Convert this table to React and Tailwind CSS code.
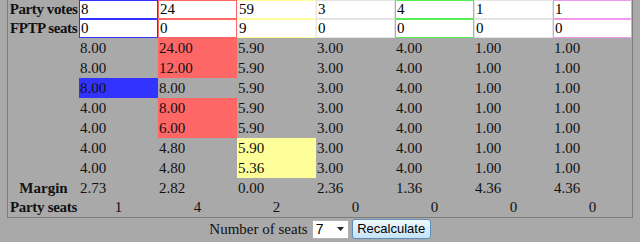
import React from "react";

// party columns: votes, FPTP seats and the colour used for inputs / winning quotients
const parties = [
  { votes: 8, fptp: 0, border: "border-[#3333ff]", fill: "bg-[#3333ff]" },
  { votes: 24, fptp: 0, border: "border-[#ff6666]", fill: "bg-[#ff6666]" },
  { votes: 59, fptp: 9, border: "border-[#ffff99]", fill: "bg-[#ffff99]" },
  { votes: 3, fptp: 0, border: "border-[#e4e4e4]", fill: "bg-white" },
  { votes: 4, fptp: 0, border: "border-[#55ee55]", fill: "bg-[#55ee55]" },
  { votes: 1, fptp: 0, border: "border-[#e4e4e4]", fill: "bg-white" },
  { votes: 1, fptp: 0, border: "border-[#ee99ee]", fill: "bg-[#ee99ee]" },
];

// quotient rows, [value, winner?] per party
const rows = [
  [["8.00"], ["24.00", 1], ["5.90"], ["3.00"], ["4.00"], ["1.00"], ["1.00"]],
  [["8.00"], ["12.00", 1], ["5.90"], ["3.00"], ["4.00"], ["1.00"], ["1.00"]],
  [["8.00", 1], ["8.00"], ["5.90"], ["3.00"], ["4.00"], ["1.00"], ["1.00"]],
  [["4.00"], ["8.00", 1], ["5.90"], ["3.00"], ["4.00"], ["1.00"], ["1.00"]],
  [["4.00"], ["6.00", 1], ["5.90"], ["3.00"], ["4.00"], ["1.00"], ["1.00"]],
  [["4.00"], ["4.80"], ["5.90", 1], ["3.00"], ["4.00"], ["1.00"], ["1.00"]],
  [["4.00"], ["4.80"], ["5.36", 1], ["3.00"], ["4.00"], ["1.00"], ["1.00"]],
];

const margins = ["2.73", "2.82", "0.00", "2.36", "1.36", "4.36", "4.36"];
const seats = [1, 4, 2, 0, 0, 0, 0];

function InputRow({ label, field }) {
  return (
    <tr className="h-[19px]">
      <th className="p-0 text-center font-bold whitespace-nowrap tracking-[-0.4px] leading-[19px]">{label}</th>
      {parties.map((p, i) => (
        <td key={i} className="p-0">
          <input
            defaultValue={p[field]}
            className={`block w-[79px] h-[19px] bg-white border ${p.border} px-[1px] text-[15px] leading-[17px] text-black outline-none font-['Liberation_Serif',serif]`}
          />
        </td>
      ))}
    </tr>
  );
}

export default function App() {
  return (
    <div className="h-[242px] overflow-hidden bg-[#a9a9a9] text-[#111] font-['Liberation_Serif',serif] text-[15px]">
      <table className="-mt-px ml-[7px] w-[626px] table-fixed border border-[#7c7c7c] border-separate border-spacing-0">
        <colgroup>
          <col className="w-[71px]" />
          {parties.map((_, i) => (
            <col key={i} className="w-[79px]" />
          ))}
        </colgroup>
        <tbody>
          <InputRow label="Party votes" field="votes" />
          <InputRow label="FPTP seats" field="fptp" />

          {rows.map((row, r) => (
            <tr key={r} className="h-[20px]">
              <td className="p-0"></td>
              {row.map(([v, win], i) => (
                <td key={i} className={`p-0 pl-px leading-[20px] ${win ? parties[i].fill : ""}`}>
                  {v}
                </td>
              ))}
            </tr>
          ))}

          <tr className="h-[20px]">
            <th className="p-0 text-center font-bold leading-[20px]">Margin</th>
            {margins.map((m, i) => (
              <td key={i} className="p-0 pl-px leading-[20px]">{m}</td>
            ))}
          </tr>
          <tr className="h-[19px]">
            <th className="p-0 text-center font-bold whitespace-nowrap tracking-[-0.3px] leading-[19px]">Party seats</th>
            {seats.map((s, i) => (
              <td key={i} className="p-0 text-center leading-[19px]">{s}</td>
            ))}
          </tr>
        </tbody>
      </table>

      {/* seat count + recalculate */}
      <div className="mt-[1px] flex items-center justify-center gap-[3px] h-[20px]">
        <span className="leading-[20px] mr-[1px]">Number of seats</span>
        <div className="flex items-center justify-between w-[37px] h-[19px] bg-white border border-[#b0b0b0] pl-[3px] pr-[4px] text-[14px] font-['Liberation_Sans',sans-serif] text-black">
          <span>7</span>
          <svg width="7" height="4" viewBox="0 0 7 4">
            <path d="M0 0h7L3.5 4z" fill="#222" />
          </svg>
        </div>
        <button className="w-[79px] h-[20px] rounded-[3px] border border-[#5b8fbf] bg-gradient-to-b from-[#eef7fd] to-[#c4e4f8] text-[13px] text-black font-['Liberation_Sans',sans-serif] leading-[18px]">
          Recalculate
        </button>
      </div>
    </div>
  );
}
